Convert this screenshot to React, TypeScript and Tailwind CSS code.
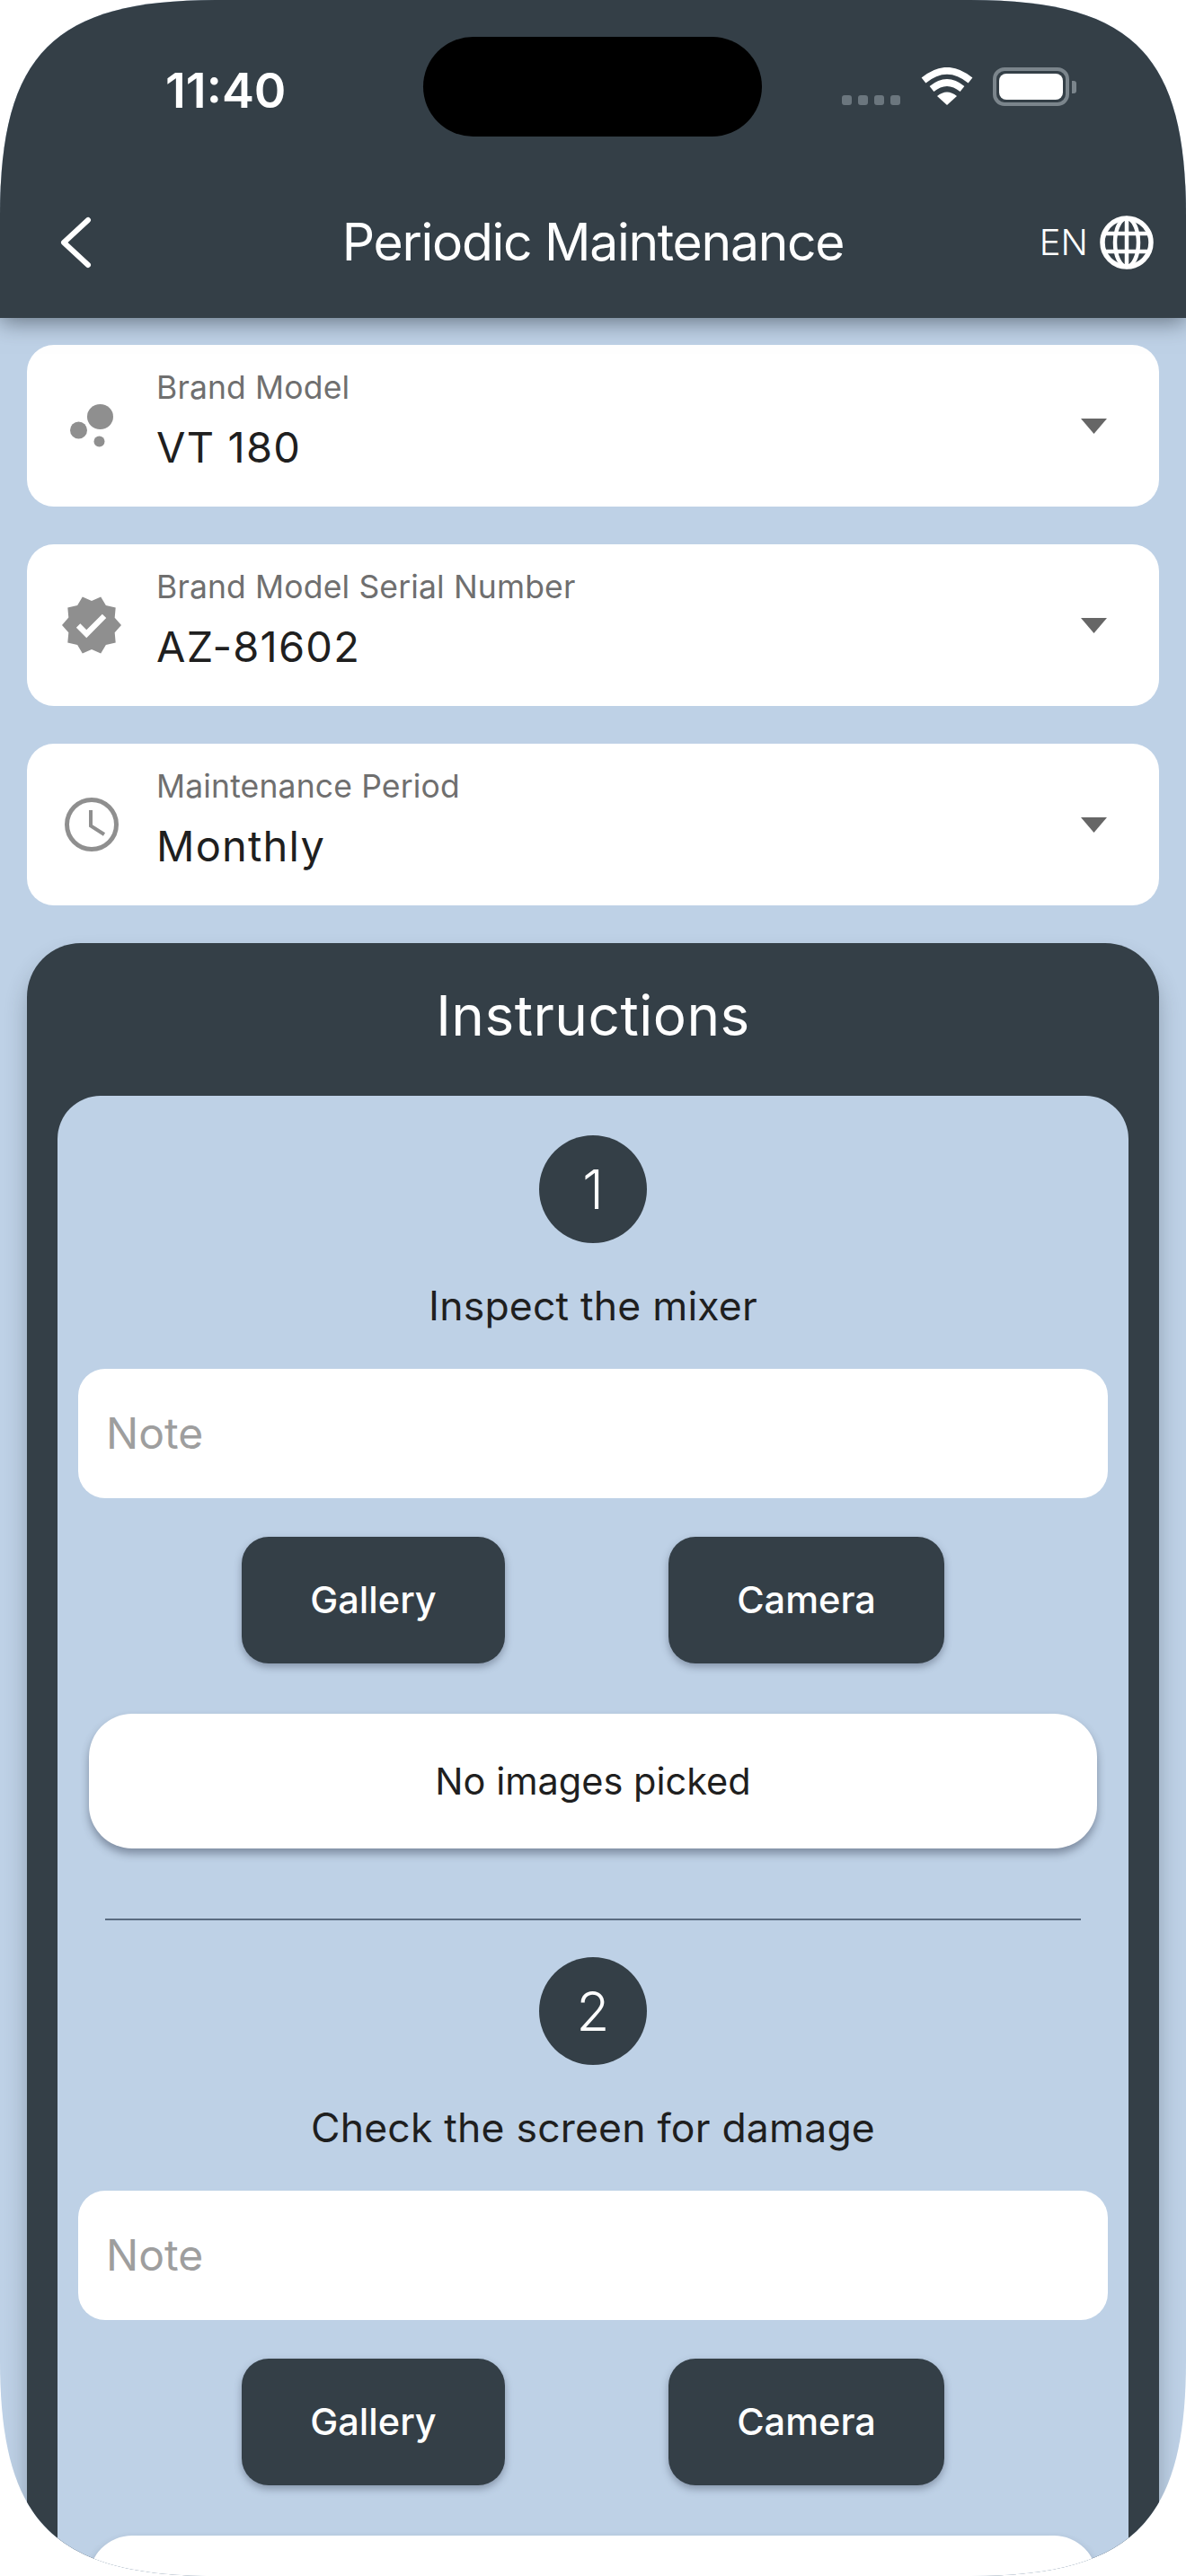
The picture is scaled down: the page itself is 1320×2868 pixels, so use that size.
import React from "react";
import { MdVerified } from "react-icons/md";

const font = "font-['Inter','Liberation_Sans',sans-serif]";

const BubbleIcon = () => (
  <svg width="48" height="48" viewBox="0 0 48 48" className="fill-[#8f8f8f]">
    <ellipse cx="9.5" cy="29" rx="9.5" ry="9.5" />
    <ellipse cx="33.5" cy="14" rx="14.5" ry="14" />
    <ellipse cx="32.5" cy="41.5" rx="6" ry="6" />
  </svg>
);

const ClockIcon = () => (
  <svg width="60" height="60" viewBox="0 0 60 60" fill="none" className="stroke-[#8f8f8f]">
    <circle cx="30" cy="30" r="27.5" strokeWidth="5" />
    <path d="M29 14 V31.5 L44 41" strokeWidth="4" />
  </svg>
);

const Dropdown = ({ icon, label, value }: { icon: React.ReactNode; label: string; value: string }) => (
  <div className="relative flex h-[180px] items-center rounded-[30px] bg-white">
    <div className="flex w-[144px] shrink-0 items-center justify-center">{icon}</div>
    <div className="flex flex-col pb-[13px]">
      <span className="text-[35.5px] leading-[46px] text-[#6f6f6f] tracking-[0.15px]">{label}</span>
      <span className="mt-[15px] text-[47px] leading-[56px] text-[#1f1f1f] tracking-[1.2px]">{value}</span>
    </div>
    <svg width="29" height="17" viewBox="0 0 29 17" className="ml-auto mr-[58px] fill-[#666666]">
      <path d="M0 0 H29 L14.5 17 Z" />
    </svg>
  </div>
);

const Step = ({ n, text }: { n: number; text: string }) => (
  <div className="flex flex-col items-center">
    <div className="flex h-[120px] w-[120px] items-center justify-center rounded-full bg-[#343f47] text-[60px] font-light text-white">
      {n}
    </div>
    <div className="mt-[47px] h-[46px] text-[44.5px] leading-[46px] text-[#1f1f1f] tracking-[0.2px]">{text}</div>
    <div className="mt-[47px] flex h-[144px] w-[1146px] items-center rounded-[30px] bg-white pl-[31px] text-[48px] text-[#9e9e9e]">
      Note
    </div>
    <div className="mt-[43px] flex justify-center gap-[182px]">
      <div className="flex h-[141px] w-[293px] items-center justify-center rounded-[30px] bg-[#343f47] text-[41.5px] font-medium text-white shadow-[0_4px_8px_rgba(50,60,80,0.4)]">
        Gallery
      </div>
      <div className="flex h-[141px] w-[307px] items-center justify-center rounded-[30px] bg-[#343f47] text-[41.5px] font-medium text-white shadow-[0_4px_8px_rgba(50,60,80,0.4)]">
        Camera
      </div>
    </div>
    {/* the second box runs off the bottom of the screen before its caption starts */}
    <div className="mt-[56px] flex h-[150px] w-[1122px] shrink-0 items-center justify-center rounded-[48px] bg-white text-[41.5px] text-[#1f1f1f] shadow-[0_6px_10px_rgba(50,60,80,0.45)]">
      {n === 1 && "No images picked"}
    </div>
    <div className="mt-[78px] h-[2px] w-[1086px] bg-[#5a6b80]" />
    <div className="h-[41px]" />
  </div>
);

export default function App() {
  return (
    <div className="bg-white">
      <div
        className={`${font} flex h-[2868px] w-[1320px] flex-col overflow-hidden bg-[#bed1e6] [clip-path:path('M0_240C0_60_60_0_240_0H1080C1260_0_1320_60_1320_240V2628C1320_2808_1260_2868_1080_2868H240C60_2868_0_2808_0_2628Z')]`}
      >
        <header className="z-10 h-[354px] shrink-0 bg-[#343f47] shadow-[0_4px_24px_rgba(40,50,60,0.6)]">
          <div className="relative flex h-[111px] translate-y-[41px]">
            <span className="ml-[184px] mt-[34px] text-[54px] leading-[52px] font-semibold text-white">11:40</span>
            <div className="absolute left-[471px] top-0 h-[111px] w-[377px] rounded-full bg-black" />
            <div className="absolute left-[937px] top-[65px] flex gap-[7px]">
              <i className="h-[11px] w-[11px] rounded-[3px] bg-[#6b767e]" />
              <i className="h-[11px] w-[11px] rounded-[3px] bg-[#6b767e]" />
              <i className="h-[11px] w-[11px] rounded-[3px] bg-[#6b767e]" />
              <i className="h-[11px] w-[11px] rounded-[3px] bg-[#6b767e]" />
            </div>
            <svg width="58" height="42" viewBox="0 0 58 42" fill="none" className="absolute left-[1025px] top-[34px] stroke-white">
              <path d="M3 14.5 Q29 -7 55 14.5" strokeWidth="7.5" />
              <path d="M12 24 Q29 10 46 24" strokeWidth="7.5" />
              <path d="M18 32 Q29 23 40 32 L29 42 Z" fill="#ffffff" stroke="none" />
            </svg>
            <div className="absolute left-[1105px] top-[34px] flex items-center">
              <div className="flex h-[43px] w-[85px] items-center justify-center rounded-[13px] border-[4px] border-[#7b858c]">
                <div className="h-[29px] w-[71px] rounded-[8px] bg-white" />
              </div>
              <div className="ml-[3px] h-[14px] w-[5px] rounded-r-[3px] bg-[#7b858c]" />
            </div>
          </div>
          <div className="mt-[129px] grid h-[60px] grid-cols-[1fr_auto_1fr] items-center">
            <svg width="40" height="60" viewBox="0 0 40 60" fill="none" className="ml-[64px] stroke-white">
              <path d="M34 5 L7 30 L34 55" strokeWidth="6" strokeLinecap="round" strokeLinejoin="round" />
            </svg>
            <h1 className="text-[57px] leading-[60px] tracking-[-1.3px] text-white">Periodic Maintenance</h1>
            <div className="flex items-center justify-end gap-[13px] pr-[36px]">
              <span className="text-[40px] font-light text-white">EN</span>
              <svg width="60" height="60" viewBox="0 0 60 60" fill="none" className="stroke-white">
                <circle cx="30" cy="30" r="27" strokeWidth="5.5" />
                <ellipse cx="30" cy="30" rx="13" ry="27" strokeWidth="4.5" />
                <path d="M30 3 V57 M5 20 H55 M5 40 H55" strokeWidth="4.5" />
              </svg>
            </div>
          </div>
        </header>

        <main className="flex flex-col gap-[42px] px-[30px] pt-[30px]">
          <Dropdown icon={<BubbleIcon />} label="Brand Model" value="VT 180" />
          <Dropdown icon={<MdVerified size={72} className="text-[#8f8f8f]" />} label="Brand Model Serial Number" value="AZ-81602" />
          <Dropdown icon={<ClockIcon />} label="Maintenance Period" value="Monthly" />

          <section className="rounded-t-[60px] bg-[#343f47] px-[34px] shadow-[0_16px_24px_rgba(40,50,60,0.3)]">
            <h2 className="flex h-[170px] items-center justify-center pb-[10px] text-[62px] tracking-[0.5px] text-white">Instructions</h2>
            <div className="rounded-[48px] bg-[#bed1e6] pt-[44px]">
              <Step n={1} text="Inspect the mixer" />
              <Step n={2} text="Check the screen for damage" />
            </div>
          </section>
        </main>
      </div>
    </div>
  );
}
